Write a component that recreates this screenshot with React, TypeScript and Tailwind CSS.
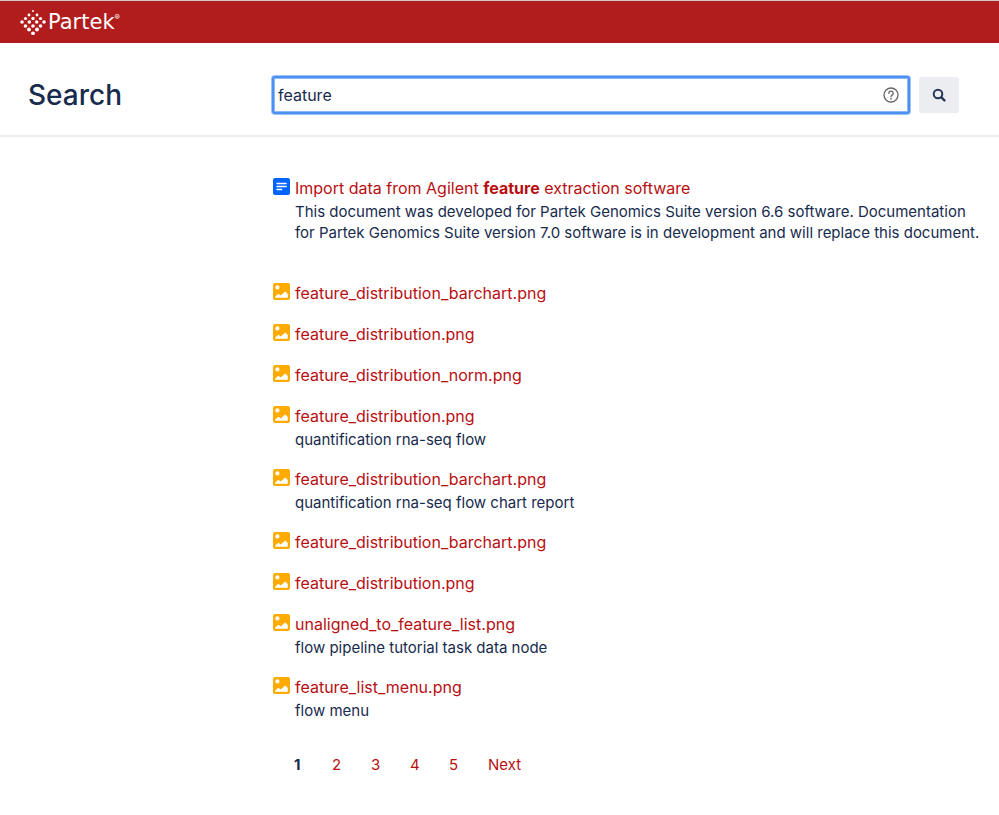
import React from 'react';

interface Result {
  type: 'page' | 'image';
  title: React.ReactNode;
  excerpt?: string;
}

const results: Result[] = [
  {
    type: 'page',
    title: (
      <>
        Import data from Agilent <strong className="font-bold">feature</strong> extraction software
      </>
    ),
    excerpt:
      'This document was developed for Partek Genomics Suite version 6.6 software. Documentation for Partek Genomics Suite version 7.0 software is in development and will replace this document.',
  },
  { type: 'image', title: 'feature_distribution_barchart.png' },
  { type: 'image', title: 'feature_distribution.png' },
  { type: 'image', title: 'feature_distribution_norm.png' },
  { type: 'image', title: 'feature_distribution.png', excerpt: 'quantification rna-seq flow' },
  {
    type: 'image',
    title: 'feature_distribution_barchart.png',
    excerpt: 'quantification rna-seq flow chart report',
  },
  { type: 'image', title: 'feature_distribution_barchart.png' },
  { type: 'image', title: 'feature_distribution.png' },
  {
    type: 'image',
    title: 'unaligned_to_feature_list.png',
    excerpt: 'flow pipeline tutorial task data node',
  },
  { type: 'image', title: 'feature_list_menu.png', excerpt: 'flow menu' },
];

// x, y, radius
const logoDots = [
  [13, 2, 1], [9, 6, 1.4], [17, 6, 1.4], [5.5, 9.5, 1.6], [13, 9.5, 1.7], [20.5, 9.5, 1.6],
  [2, 13, 1.8], [9.3, 13, 1.8], [16.7, 13, 1.8], [24, 13, 1.8],
  [5.5, 17, 1.8], [13, 17, 1.8], [20.5, 17, 1.8], [9, 20.5, 1.9], [17, 20.5, 1.9], [13, 24.3, 1.9],
];

const Logo: React.FC = () => (
  <a href="#home" className="flex items-center text-white">
    <svg className="h-[26px] w-[26px]" viewBox="0 0 26 26" fill="currentColor" aria-hidden="true">
      {logoDots.map(([x, y, r]) => (
        <circle key={`${x}-${y}`} cx={x} cy={y} r={r} />
      ))}
    </svg>
    <span className="ml-[2px] font-['DejaVu_Sans',sans-serif] text-[21px] leading-6">Partek</span>
    <span className="self-start text-[8px] leading-4">®</span>
  </a>
);

const PageIcon: React.FC = () => (
  <svg className="mt-[2px] h-[17px] w-[17px] shrink-0" viewBox="0 0 17 17" aria-hidden="true">
    <rect width="17" height="17" rx="2" fill="#0065ff" />
    <path d="M4 5.5h9.2M4 8.5h9.2M4 11.5h4.6" stroke="#fff" strokeWidth="1.4" strokeLinecap="round" />
  </svg>
);

const ImageIcon: React.FC = () => (
  <svg className="mt-[2px] h-[17px] w-[17px] shrink-0" viewBox="0 0 17 17" aria-hidden="true">
    <rect width="17" height="17" rx="2" fill="#ffab00" />
    <circle cx="4.4" cy="4.4" r="2.1" fill="#fff" />
    <path d="M2.2 14.8v-1.3l3.2-2.8 2.3 1.9 4.5-4.2 2.6 2.7v3.7z" fill="#fff" />
  </svg>
);

const ResultItem: React.FC<{ result: Result }> = ({ result }) => (
  <li className={`flex gap-[5px] ${result.type === 'page' ? 'mb-[38px]' : 'mb-[17px]'}`}>
    {result.type === 'page' ? <PageIcon /> : <ImageIcon />}
    <div className="min-w-0">
      <h2 className="text-base leading-6">
        <a href="#result" className="text-[#b80f12] hover:underline">
          {result.title}
        </a>
      </h2>
      {result.excerpt && <p className="mt-px text-[15px] leading-[21px]">{result.excerpt}</p>}
    </div>
  </li>
);

export default function App() {
  return (
    <div className="min-h-screen bg-white font-[Inter,sans-serif] text-[#172b4d]">
      <header className="flex h-[43px] items-center border-t border-[#ccc] bg-[#b11c1c] px-5">
        <Logo />
      </header>

      <form
        className="flex items-center border-b-2 border-[#ebecf0] pt-8 pr-10 pb-5 pl-7"
        onSubmit={(e) => e.preventDefault()}
      >
        <h1 className="w-[243px] shrink-0 text-[28px] leading-10 font-medium">
          <label htmlFor="query">Search</label>
        </h1>
        <div className="relative flex-1 p-px">
          <input
            id="query"
            type="text"
            defaultValue="feature"
            className="block h-[38px] w-full rounded-[3px] border-2 border-[#4c90f2] bg-white pr-9 pl-1 text-base shadow-[0_0_0_1px_#9dc3f9,inset_0_0_0_1px_#8ab8f8] outline-none"
          />
          <button type="button" aria-label="Search help" className="absolute top-3 right-3 text-[#666]">
            <svg className="h-4 w-4" viewBox="0 0 16 16" fill="none" stroke="currentColor" strokeWidth="1.3">
              <circle cx="8" cy="8" r="7" />
              <path d="M5.8 6.3a2.2 2.2 0 1 1 3.4 1.8c-.8.5-1.2.8-1.2 1.7" strokeLinecap="round" />
              <circle cx="8" cy="11.9" r=".8" fill="currentColor" stroke="none" />
            </svg>
          </button>
        </div>
        <button
          type="submit"
          aria-label="Search"
          className="ml-2 flex h-9 w-10 items-center justify-center rounded-[3px] bg-[#ecedf0] text-[#253858]"
        >
          <svg className="h-[14px] w-[14px]" viewBox="0 0 14 14" fill="none" stroke="currentColor">
            <circle cx="6" cy="6" r="4.3" strokeWidth="2" />
            <path d="M9.4 9.4l3 3" strokeWidth="2.4" strokeLinecap="round" />
          </svg>
        </button>
      </form>

      <main className="pt-[39px] pr-4 pb-10 pl-[273px]">
        <ul>
          {results.map((result, i) => (
            <ResultItem key={i} result={result} />
          ))}
        </ul>
        <nav aria-label="Pages" className="mt-8 ml-[21px] flex gap-[29px] text-[15px] leading-6 text-[#b80f12]">
          <span aria-current="page" className="w-[9px] font-bold text-[#172b4d]">
            1
          </span>
          {['2', '3', '4', '5'].map((page) => (
            <a key={page} href="#page" className="w-[10px] hover:underline">
              {page}
            </a>
          ))}
          <a href="#page" className="hover:underline">
            Next
          </a>
        </nav>
      </main>
    </div>
  );
}
